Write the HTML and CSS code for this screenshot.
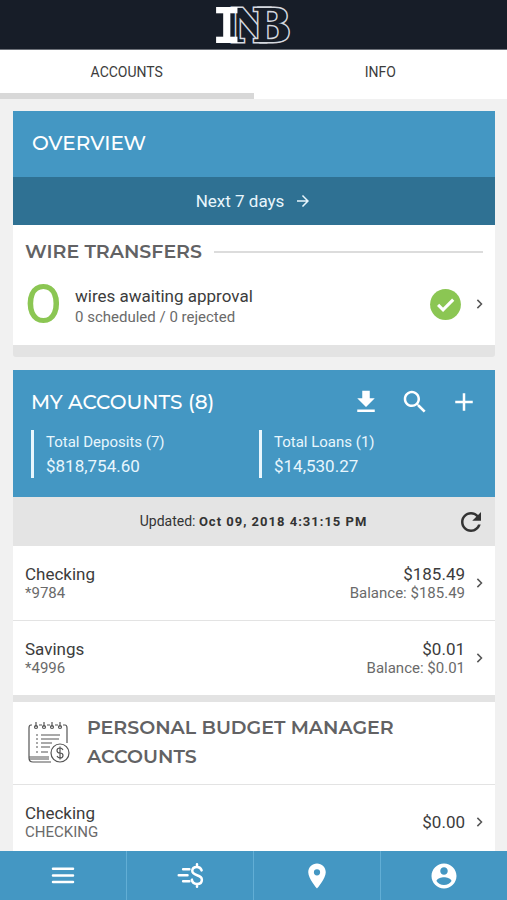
FILE: index.html
```html
<!DOCTYPE html>
<html lang="en">
<head>
    <meta charset="UTF-8">
    <meta name="viewport" content="width=device-width, initial-scale=1.0">
    <title>INB Accounts</title>
    <link rel="stylesheet" href="styles.css">
</head>
<body>
    <header class="top-bar">
        <svg class="logo" viewBox="0 0 76 40" role="img" aria-label="INB">
            <text class="logo-outline" x="14" y="37">N</text>
            <text class="logo-outline" x="36" y="37">B</text>
            <text class="logo-solid" x="-4" y="38">I</text>
        </svg>
    </header>

    <nav class="tabs">
        <a class="tab active" href="#accounts">ACCOUNTS</a>
        <a class="tab" href="#info">INFO</a>
    </nav>

    <main class="content">
        <section class="card overview">
            <div class="card-header">
                <h2>OVERVIEW</h2>
            </div>
            <button class="range-btn" type="button">
                Next 7 days
                <svg class="icon-arrow" viewBox="0 0 24 24"><path d="M12 4l-1.4 1.4L16.2 11H4v2h12.2l-5.6 5.6L12 20l8-8z"/></svg>
            </button>
            <div class="wires">
                <h3 class="wires-title">WIRE TRANSFERS</h3>
                <a class="wires-row" href="#wires">
                    <span class="wires-count">0</span>
                    <span class="wires-text">
                        <span class="primary">wires awaiting approval</span>
                        <span class="secondary">0 scheduled / 0 rejected</span>
                    </span>
                    <svg class="icon-check" viewBox="0 0 24 24"><circle cx="12" cy="12" r="10"/><path d="M7.2 12.2l3.2 3.2 6.6-6.6"/></svg>
                    <svg class="chevron" viewBox="0 0 24 24"><path d="M8.5 6.5L14 12l-5.500 5.500"/></svg>
                </a>
            </div>
        </section>

        <section class="card accounts" id="accounts">
            <div class="accounts-header">
                <div class="title-row">
                    <h2>MY ACCOUNTS (8)</h2>
                    <div class="actions">
                        <button class="icon-btn" type="button" aria-label="Download">
                            <svg viewBox="0 0 24 24"><path d="M19 9h-4V3H9v6H5l7 7 7-7zM5 18v2h14v-2H5z"/></svg>
                        </button>
                        <button class="icon-btn" type="button" aria-label="Search">
                            <svg viewBox="0 0 24 24"><path d="M15.5 14h-.79l-.28-.27C15.41 12.59 16 11.11 16 9.500 16 5.910 13.090 3 9.500 3S3 5.910 3 9.500 5.910 16 9.500 16c1.610 0 3.090-.59 4.230-1.570l.27.28v.79l5 4.990L20.490 19l-4.990-5zm-6 0C7.010 14 5 11.990 5 9.500S7.010 5 9.500 5 14 7.010 14 9.500 11.990 14 9.500 14z"/></svg>
                        </button>
                        <button class="icon-btn" type="button" aria-label="Add account">
                            <svg viewBox="0 0 24 24"><path d="M19 13h-6v6h-2v-6H5v-2h6V5h2v6h6v2z"/></svg>
                        </button>
                    </div>
                </div>
                <div class="totals">
                    <div class="total">
                        <span class="total-label">Total Deposits (7)</span>
                        <span class="total-value">$818,754.60</span>
                    </div>
                    <div class="total">
                        <span class="total-label">Total Loans (1)</span>
                        <span class="total-value">$14,530.27</span>
                    </div>
                </div>
            </div>

            <div class="updated">
                <p>Updated: <strong>Oct 09, 2018 4:31:15 PM</strong></p>
                <button class="icon-btn" type="button" aria-label="Refresh">
                    <svg viewBox="0 0 24 24"><path d="M17.650 6.350C16.200 4.900 14.210 4 12 4c-4.420 0-7.990 3.580-7.990 8s3.570 8 7.990 8c3.730 0 6.840-2.550 7.730-6h-2.080c-.82 2.330-3.040 4-5.650 4-3.310 0-6-2.690-6-6s2.690-6 6-6c1.660 0 3.140.69 4.220 1.780L13 11h7V4l-2.350 2.350z"/></svg>
                </button>
            </div>

            <a class="account" href="#checking">
                <span class="account-name">
                    <span class="primary">Checking</span>
                    <span class="secondary">*9784</span>
                </span>
                <span class="account-amount">
                    <span class="primary">$185.49</span>
                    <span class="secondary">Balance: $185.49</span>
                </span>
                <svg class="chevron" viewBox="0 0 24 24"><path d="M8.500 6.500L14 12l-5.500 5.500"/></svg>
            </a>
            <a class="account" href="#savings">
                <span class="account-name">
                    <span class="primary">Savings</span>
                    <span class="secondary">*4996</span>
                </span>
                <span class="account-amount">
                    <span class="primary">$0.01</span>
                    <span class="secondary">Balance: $0.01</span>
                </span>
                <svg class="chevron" viewBox="0 0 24 24"><path d="M8.500 6.500L14 12l-5.500 5.500"/></svg>
            </a>

            <div class="budget-title">
                <svg class="icon-budget" viewBox="0 0 44 44">
                    <path d="M5 5H4Q2 5 2 8V38Q2 42 6 42H24M2 37H22M2 39H22M36 5h2q2 0 2 3V23M12 5h3M20 5h3M28 5h3"/>
                    <path d="M9 2v5M17 2v5M25 2v5M33 2v5"/>
                    <circle cx="9" cy="7" r="1.500"/><circle cx="17" cy="7" r="1.500"/><circle cx="25" cy="7" r="1.500"/><circle cx="33" cy="7" r="1.500"/>
                    <path d="M9 15h2M14 15h19M9 19h2M14 19h18M9 23h2M14 23h11M9 27h2M14 27h9M9 32h2M14 32h7"/>
                    <circle cx="33" cy="33" r="9"/>
                    <path d="M36 30q-1-2-3-2-3 0-3 2.500t3 2.500 3 2.500-3 2.500q-2 0-3-2M33 26.500v13"/>
                </svg>
                <h3>PERSONAL BUDGET MANAGER ACCOUNTS</h3>
            </div>

            <a class="account" href="#budget-checking">
                <span class="account-name">
                    <span class="primary">Checking</span>
                    <span class="secondary">CHECKING</span>
                </span>
                <span class="account-amount">
                    <span class="primary">$0.00</span>
                </span>
                <svg class="chevron" viewBox="0 0 24 24"><path d="M8.500 6.500L14 12l-5.500 5.500"/></svg>
            </a>
        </section>
    </main>

    <nav class="bottom-nav">
        <a href="#menu" aria-label="Menu">
            <svg viewBox="0 0 24 24"><path class="line" d="M4 6.200h16M4 11.500h16M4 16.800h16"/></svg>
        </a>
        <a href="#transfer" aria-label="Transfer money">
            <svg viewBox="0 0 24 24"><path class="line" d="M6.500 6.500h5M3 11.300h7M6.500 16.200h5M21.300 7.500q-.8-2.800-3.700-2.800-3.800 0-3.800 3.100c0 4.600 7.700 2.600 7.700 7.100 0 2.200-1.700 3.400-3.900 3.400-2.600 0-3.900-1.300-4.100-3.400M17.600 2.500v2M17.600 18.500v2"/></svg>
        </a>
        <a href="#locations" aria-label="Locations">
            <svg viewBox="0 0 24 24"><path d="M12 2C8.130 2 5 5.130 5 9c0 5.250 7 13 7 13s7-7.750 7-13c0-3.870-3.130-7-7-7zm0 9.500a2.500 2.500 0 1 1 0-5 2.500 2.500 0 0 1 0 5z"/></svg>
        </a>
        <a href="#profile" aria-label="Profile">
            <svg viewBox="0 0 24 24"><path d="M12 2C6.480 2 2 6.480 2 12s4.480 10 10 10 10-4.480 10-10S17.520 2 12 2zm0 3c1.660 0 3 1.340 3 3s-1.340 3-3 3-3-1.340-3-3 1.340-3 3-3zm0 14.200c-2.500 0-4.710-1.280-6-3.220.03-1.990 4-3.080 6-3.080 1.990 0 5.970 1.090 6 3.080-1.290 1.940-3.500 3.220-6 3.220z"/></svg>
        </a>
    </nav>
</body>
</html>
```
FILE: styles.css
```css
* {
    margin: 0;
    padding: 0;
    box-sizing: border-box;
}

body {
    height: 100vh;
    display: flex;
    flex-direction: column;
    background: #f1f1f1;
    color: #3c3c3c;
    font-family: Roboto, "Liberation Sans", sans-serif;
    font-size: 17px;
    line-height: 20px;
}

a {
    color: inherit;
    text-decoration: none;
}

button {
    border: none;
    background: none;
    color: inherit;
    font: inherit;
    cursor: pointer;
}

svg {
    display: block;
    flex: none;
    fill: currentColor;
}

h2,
h3 {
    font-family: Montserrat, Inter, sans-serif;
    line-height: 29px;
}

h2 {
    font-size: 20px;
    font-weight: 500;
}

h3 {
    color: #626264;
    font-size: 19px;
    font-weight: 600;
}

/* Header */
.top-bar {
    display: flex;
    justify-content: center;
    align-items: center;
    height: 50px;
    flex: none;
    background: #171d28;
    border-bottom: 1px solid #6c7078;
}

.logo {
    width: 76px;
    height: 40px;
    overflow: visible;
    font-family: "DejaVu Serif", serif;
    font-size: 46px;
    font-weight: bold;
}

.logo-solid {
    fill: #fff;
    font-family: "DejaVu Sans Mono", monospace;
    font-size: 49px;
}

.logo-outline {
    fill: #171d28;
    stroke: #d5d9e0;
    stroke-width: 3px;
    paint-order: stroke;
}

.tabs {
    display: flex;
    flex: none;
    background: #fff;
    font-size: 14px;
}

.tab {
    flex: 1;
    height: 49px;
    padding-top: 12px;
    border-bottom: 6px solid transparent;
    text-align: center;
}

.tab.active {
    border-color: #d8d8d8;
}

.content {
    flex: 1;
    min-height: 0;
    overflow-y: auto;
    scrollbar-width: none;
    padding: 12px 12px 12px 13px;
}

/* Cards */
.card {
    background: #fff;
    margin-bottom: 13px;
}

.card-header {
    padding: 18px 19px 19px;
    background: #4497c3;
    color: #fff;
}

.overview {
    border-bottom: 12px solid #e3e3e3;
    border-radius: 0 0 3px 3px;
}

.range-btn {
    display: flex;
    justify-content: center;
    align-items: center;
    gap: 10px;
    width: 100%;
    height: 48px;
    background: #2f7193;
    color: #e8f6fd;
}

.icon-arrow {
    width: 18px;
    height: 18px;
}

.wires {
    padding: 12px 6px 13px 12px;
}

.wires-title {
    display: flex;
    align-items: center;
    gap: 12px;
    margin-right: 6px;
}

.wires-title::after {
    content: "";
    flex: 1;
    height: 2px;
    background: #dcdcdc;
}

.wires-row {
    display: flex;
    align-items: center;
    margin-top: 10px;
}

.wires-count {
    width: 50px;
    color: #8bc653;
    font-family: Montserrat, Inter, sans-serif;
    font-size: 55px;
    font-weight: 500;
    line-height: 56px;
}

.wires-text {
    flex: 1;
    padding-top: 4px;
}

.primary,
.secondary {
    display: block;
}

.secondary {
    color: #6a6a6a;
    font-size: 15px;
    line-height: 18px;
}

.wires-text .secondary {
    margin-top: 2px;
}

.icon-check {
    width: 37px;
    height: 37px;
    margin-right: 7px;
}

.icon-check circle {
    fill: #8bc653;
}

.icon-check path {
    fill: none;
    stroke: #fff;
    stroke-width: 2px;
}

.chevron {
    width: 18px;
    height: 18px;
    fill: none;
    stroke: #555;
    stroke-width: 2px;
}

/* Accounts */
.accounts-header {
    padding: 17px 16px 19px 18px;
    background: #4497c3;
    color: #fff;
}

.title-row,
.actions {
    display: flex;
    align-items: center;
    justify-content: space-between;
}

.actions {
    gap: 19px;
}

.icon-btn svg {
    width: 30px;
    height: 30px;
}

.totals {
    display: grid;
    grid-template-columns: 1fr 1fr;
    column-gap: 8px;
    margin-top: 13px;
}

.total {
    padding-left: 12px;
    border-left: 3px solid #e8f6fd;
    color: #e8f6fd;
}

.total-label,
.total-value {
    display: block;
    line-height: 24px;
}

.total-label {
    font-size: 15px;
}

.updated {
    display: flex;
    align-items: center;
    height: 49px;
    padding: 0 9px 0 12px;
    background: #e4e4e4;
    color: #333;
    font-size: 14px;
}

.updated p {
    flex: 1;
    padding-left: 26px;
    text-align: center;
}

.updated strong {
    font-size: 13px;
    letter-spacing: 1px;
}

.account {
    display: flex;
    align-items: center;
    gap: 6px;
    height: 75px;
    padding: 0 6px 0 12px;
    border-bottom: 1px solid #e3e3e3;
}

.account-name {
    flex: 1;
}

.account-amount {
    text-align: right;
}

.budget-title {
    display: flex;
    align-items: center;
    gap: 16px;
    padding: 11px 14px 13px;
    border-top: 6px solid #e3e3e3;
    border-bottom: 1px solid #e3e3e3;
}

.icon-budget {
    width: 44px;
    height: 44px;
    fill: none;
    stroke: #555;
    stroke-width: 1.2px;
}

/* Bottom navigation */
.bottom-nav {
    display: flex;
    flex: none;
    height: 49px;
    background: #4497c3;
    color: #fff;
}

.bottom-nav a {
    flex: 1;
    display: flex;
    justify-content: center;
    align-items: center;
}

.bottom-nav a + a {
    border-left: 1px solid #62aed5;
}

.bottom-nav svg {
    width: 30px;
    height: 30px;
}

.bottom-nav .line {
    fill: none;
    stroke: currentColor;
    stroke-width: 2px;
    stroke-linecap: round;
}
```
